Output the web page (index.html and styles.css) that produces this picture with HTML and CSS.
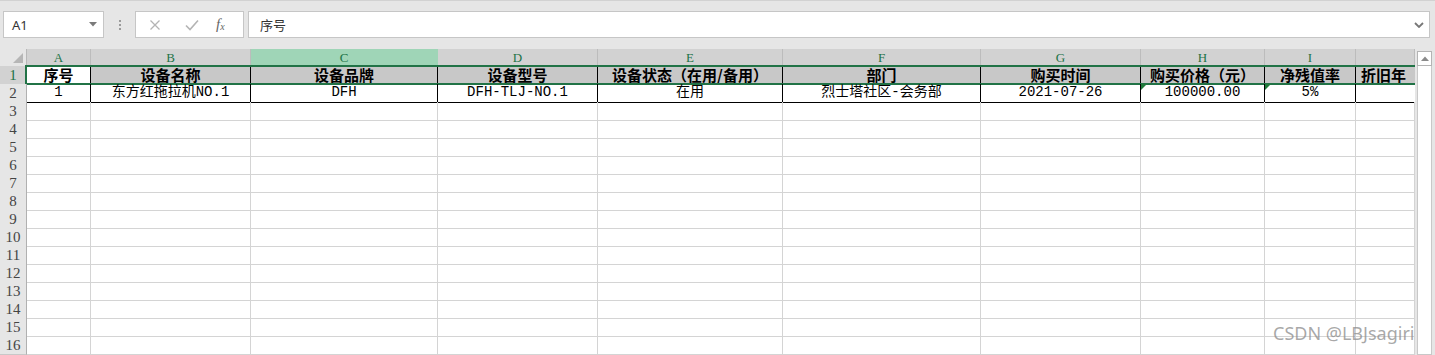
FILE: index.html
```html
<!DOCTYPE html>
<html lang="zh">
<head>
<meta charset="utf-8">
<title>Sheet</title>
<link rel="stylesheet" href="styles.css">
</head>
<body>
<div class="app">
  <div class="toolbar">
    <div class="namebox">
      <span class="nb-text">A1</span>
      <svg class="caret" width="8" height="5" viewBox="0 0 8 5"><path d="M0 0H8L4 4.5Z" fill="#7a7a7a"/></svg>
    </div>
    <div class="dots"><i></i><i></i><i></i></div>
    <div class="fxbox">
      <svg class="ico" width="12" height="12" viewBox="0 0 12 12"><path d="M1.5 1.5L10.5 10.5M10.5 1.5L1.5 10.5" stroke="#b4b4b4" stroke-width="1.3" fill="none"/></svg>
      <svg class="ico" width="14" height="12" viewBox="0 0 14 12"><path d="M1 6.5L5 10.5L13 1.5" stroke="#b4b4b4" stroke-width="1.6" fill="none"/></svg>
      <span class="fx">f<sub>x</sub></span>
    </div>
    <div class="formula">
      <span class="f-text">序号</span>
      <svg class="chev" width="10" height="6" viewBox="0 0 10 6"><path d="M1 1L5 5L9 1" stroke="#777" stroke-width="1.8" fill="none"/></svg>
    </div>
  </div>
  <div class="sheet">
    <div class="grid">
      <div class="row colhead">
        <div class="corner"><span class="tri"></span></div>
        <div class="ch">A</div><div class="ch">B</div><div class="ch sel">C</div><div class="ch">D</div><div class="ch">E</div><div class="ch">F</div><div class="ch">G</div><div class="ch">H</div><div class="ch">I</div><div class="ch"></div>
      </div>
      <div class="row r1">
        <div class="rh rh-sel">1</div>
        <div class="c hd active">序号</div><div class="c hd">设备名称</div><div class="c hd">设备品牌</div><div class="c hd">设备型号</div><div class="c hd">设备状态（在用/备用）</div><div class="c hd">部门</div><div class="c hd">购买时间</div><div class="c hd">购买价格（元）</div><div class="c hd">净残值率</div><div class="c hd left">折旧年</div>
      </div>
      <div class="row r2">
        <div class="rh">2</div>
        <div class="c dt">1</div><div class="c dt">东方红拖拉机NO.1</div><div class="c dt">DFH</div><div class="c dt">DFH-TLJ-NO.1</div><div class="c dt">在用</div><div class="c dt">烈士塔社区-会务部</div><div class="c dt">2021-07-26</div><div class="c dt flag">100000.00</div><div class="c dt flag">5%</div><div class="c dt"></div>
      </div>
      <div class="row"><div class="rh">3</div><div class="c"></div><div class="c"></div><div class="c"></div><div class="c"></div><div class="c"></div><div class="c"></div><div class="c"></div><div class="c"></div><div class="c"></div><div class="c"></div></div>
      <div class="row"><div class="rh">4</div><div class="c"></div><div class="c"></div><div class="c"></div><div class="c"></div><div class="c"></div><div class="c"></div><div class="c"></div><div class="c"></div><div class="c"></div><div class="c"></div></div>
      <div class="row"><div class="rh">5</div><div class="c"></div><div class="c"></div><div class="c"></div><div class="c"></div><div class="c"></div><div class="c"></div><div class="c"></div><div class="c"></div><div class="c"></div><div class="c"></div></div>
      <div class="row"><div class="rh">6</div><div class="c"></div><div class="c"></div><div class="c"></div><div class="c"></div><div class="c"></div><div class="c"></div><div class="c"></div><div class="c"></div><div class="c"></div><div class="c"></div></div>
      <div class="row"><div class="rh">7</div><div class="c"></div><div class="c"></div><div class="c"></div><div class="c"></div><div class="c"></div><div class="c"></div><div class="c"></div><div class="c"></div><div class="c"></div><div class="c"></div></div>
      <div class="row"><div class="rh">8</div><div class="c"></div><div class="c"></div><div class="c"></div><div class="c"></div><div class="c"></div><div class="c"></div><div class="c"></div><div class="c"></div><div class="c"></div><div class="c"></div></div>
      <div class="row"><div class="rh">9</div><div class="c"></div><div class="c"></div><div class="c"></div><div class="c"></div><div class="c"></div><div class="c"></div><div class="c"></div><div class="c"></div><div class="c"></div><div class="c"></div></div>
      <div class="row"><div class="rh">10</div><div class="c"></div><div class="c"></div><div class="c"></div><div class="c"></div><div class="c"></div><div class="c"></div><div class="c"></div><div class="c"></div><div class="c"></div><div class="c"></div></div>
      <div class="row"><div class="rh">11</div><div class="c"></div><div class="c"></div><div class="c"></div><div class="c"></div><div class="c"></div><div class="c"></div><div class="c"></div><div class="c"></div><div class="c"></div><div class="c"></div></div>
      <div class="row"><div class="rh">12</div><div class="c"></div><div class="c"></div><div class="c"></div><div class="c"></div><div class="c"></div><div class="c"></div><div class="c"></div><div class="c"></div><div class="c"></div><div class="c"></div></div>
      <div class="row"><div class="rh">13</div><div class="c"></div><div class="c"></div><div class="c"></div><div class="c"></div><div class="c"></div><div class="c"></div><div class="c"></div><div class="c"></div><div class="c"></div><div class="c"></div></div>
      <div class="row"><div class="rh">14</div><div class="c"></div><div class="c"></div><div class="c"></div><div class="c"></div><div class="c"></div><div class="c"></div><div class="c"></div><div class="c"></div><div class="c"></div><div class="c"></div></div>
      <div class="row"><div class="rh">15</div><div class="c"></div><div class="c"></div><div class="c"></div><div class="c"></div><div class="c"></div><div class="c"></div><div class="c"></div><div class="c"></div><div class="c"></div><div class="c"></div></div>
      <div class="row"><div class="rh">16</div><div class="c"></div><div class="c"></div><div class="c"></div><div class="c"></div><div class="c"></div><div class="c"></div><div class="c"></div><div class="c"></div><div class="c"></div><div class="c"></div></div>
    </div>
    <div class="vscroll">
      <div class="sb-up"><svg width="8" height="5" viewBox="0 0 8 5"><path d="M0 5H8L4 0.5Z" fill="#8a8a8a"/></svg></div>
      <div class="sb-track"></div>
    </div>
  </div>
  <div class="watermark">CSDN @LBJsagiri</div>
</div>
</body>
</html>
```
FILE: styles.css
```css
* { box-sizing: border-box; }
html, body { margin: 0; padding: 0; }
body {
  width: 1435px;
  height: 355px;
  overflow: hidden;
  background: #e6e6e6;
  font-family: "Noto Sans CJK SC", "Noto Sans", sans-serif;
}
.app { position: relative; width: 1435px; height: 355px; }

/* toolbar */
.toolbar {
  height: 49px;
  border-top: 1px solid #d2d2d2;
  display: flex;
  align-items: flex-start;
  padding: 10px 5px 0 3px;
  background: #e6e6e6;
}
.namebox {
  width: 101px;
  height: 27px;
  background: #fff;
  border: 1px solid #c6c6c6;
  display: flex;
  align-items: center;
  justify-content: space-between;
  padding: 0 6px 0 8px;
}
.nb-text { font-size: 13px; color: #333; font-family: "Noto Sans", sans-serif; }
.dots {
  width: 31px;
  height: 27px;
  display: flex;
  flex-direction: column;
  align-items: center;
  justify-content: center;
  gap: 2px;
}
.dots i { width: 2px; height: 2px; background: #9a9a9a; display: block; }
.fxbox {
  width: 109px;
  height: 27px;
  background: #fff;
  border: 1px solid #c6c6c6;
  display: flex;
  align-items: center;
  padding: 0 0 0 13px;
}
.fxbox .ico:first-child { margin-right: 24px; }
.fxbox .ico:nth-child(2) { margin-right: 17px; }
.fx {
  font-family: "Liberation Serif", serif;
  font-style: italic;
  font-size: 15px;
  color: #666;
  line-height: 1;
}
.fx sub { font-size: 10px; vertical-align: -1px; }
.formula {
  margin-left: 4px;
  flex: 1;
  height: 27px;
  background: #fff;
  border: 1px solid #c6c6c6;
  display: flex;
  align-items: center;
  justify-content: space-between;
  padding: 0 5px 0 11px;
}
.f-text { font-size: 13px; color: #333; }

/* sheet */
.sheet {
  display: flex;
  height: 306px;
}
.grid {
  width: 1415px;
  background: #fff;
  overflow: hidden;
}
.row {
  display: grid;
  grid-template-columns: 27px 64px 160px 187px 160px 185px 198px 160px 124px 91px 59px;
  height: 18px;
  position: relative;
}
.colhead { height: 17px; }
.corner {
  background: #e6e6e6;
  border-right: 1px solid #b8b8b8;
  border-bottom: 1px solid #b8b8b8;
  position: relative;
}
.tri {
  position: absolute;
  right: 3px;
  bottom: 3px;
  width: 0; height: 0;
  border-left: 10px solid transparent;
  border-bottom: 10px solid #b6b6b6;
}
.ch {
  background: #d2d2d2;
  border-right: 1px solid #bcbcbc;
  border-bottom: 1px solid #bcbcbc;
  font-family: "Liberation Serif", serif;
  font-size: 13px;
  color: #217346;
  text-align: center;
  line-height: 17px;
}
.ch.sel { background: #9fd5b7; border-right-color: #9fd5b7; }

.rh {
  background: #e6e6e6;
  border-right: 1px solid #b0b0b0;
  border-bottom: 1px solid #c8c8c8;
  font-family: "Liberation Serif", serif;
  font-size: 15px;
  color: #444;
  text-align: center;
  line-height: 18px;
}
.rh-sel { background: #d2d2d2; color: #217346; }

.c {
  border-right: 1px solid #d4d4d4;
  border-bottom: 1px solid #d4d4d4;
  font-family: "Liberation Mono", "Noto Sans CJK SC", monospace;
  font-size: 14px;
  color: #000;
  text-align: center;
  white-space: nowrap;
  line-height: 17px;
  position: relative;
}
.r1 .c {
  background: #c8c8c8;
  border-right: 1px solid #000;
  border-bottom: 1px solid #000;
}
.r1 .c.active { background: #fff; }
.r1 .c.left { text-align: left; padding-left: 5px; border-right: none; }
.hd {
  font-weight: bold;
  font-size: 15px;
  font-family: "Noto Sans CJK SC", sans-serif;
  line-height: 18px !important;
}
.r1::after {
  content: "";
  position: absolute;
  left: 25px;
  right: -5px;
  top: -1px;
  bottom: -1px;
  border: 2px solid #217346;
  pointer-events: none;
}
.r2 .c {
  border-right: 1px solid #000;
  border-bottom: 1px solid #000;
}
.r2 .c:last-child { border-right: none; }
.flag::before {
  content: "";
  position: absolute;
  left: 0;
  top: 0;
  width: 0; height: 0;
  border-top: 6px solid #1f7a3a;
  border-right: 6px solid transparent;
}

/* scrollbar */
.vscroll {
  width: 20px;
  background: #e6e6e6;
  padding: 2px 3px 0 2px;
  display: flex;
  flex-direction: column;
}
.sb-up {
  height: 15px;
  background: #fff;
  border: 1px solid #b4b4b4;
  display: flex;
  align-items: center;
  justify-content: center;
}
.sb-track {
  flex: 1;
  background: #fff;
  border: 1px solid #c8c8c8;
  border-top: none;
}

.watermark {
  position: absolute;
  left: 1273px;
  top: 321px;
  font-family: "Noto Sans", sans-serif;
  font-size: 18px;
  color: rgba(140, 140, 140, 0.75);
  line-height: 24px;
  white-space: nowrap;
}
```
